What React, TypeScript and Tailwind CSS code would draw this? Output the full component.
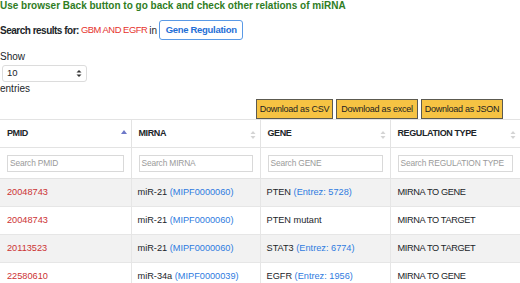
import React from "react";

type Row = {
  pmid: string;
  mirna: string;
  mipf: string;
  gene: string;
  entrez?: string;
  type: string;
};

const rows: Row[] = [
  { pmid: "20048743", mirna: "miR-21", mipf: "MIPF0000060", gene: "PTEN", entrez: "5728", type: "MIRNA TO GENE" },
  { pmid: "20048743", mirna: "miR-21", mipf: "MIPF0000060", gene: "PTEN mutant", type: "MIRNA TO TARGET" },
  { pmid: "20113523", mirna: "miR-21", mipf: "MIPF0000060", gene: "STAT3", entrez: "6774", type: "MIRNA TO TARGET" },
  { pmid: "22580610", mirna: "miR-34a", mipf: "MIPF0000039", gene: "EGFR", entrez: "1956", type: "MIRNA TO GENE" },
];

const columns = [
  { label: "PMID", search: "Search PMID", active: true },
  { label: "MIRNA", search: "Search MIRNA" },
  { label: "GENE", search: "Search GENE" },
  { label: "REGULATION TYPE", search: "Search REGULATION TYPE" },
];

const downloads = [
  { label: "Download as CSV", w: "w-[77px]" },
  { label: "Download as excel", w: "w-[82px]" },
  { label: "Download as JSON", w: "w-[82px]" },
];

function SortIcon({ active }: { active?: boolean }) {
  if (active) {
    return (
      <svg width="6" height="10" viewBox="0 0 6 10" className="absolute right-[4px] top-[9px]">
        <path d="M0 5 L3 1 L6 5 Z" fill="#6d78c8" />
      </svg>
    );
  }
  return (
    <svg width="6" height="10" viewBox="0 0 6 10" className="absolute right-[4px] top-[10px]">
      <path d="M0.5 4 L3 1 L5.5 4 Z" fill="#d4d4d4" />
      <path d="M0.5 6 L3 9 L5.5 6 Z" fill="#d4d4d4" />
    </svg>
  );
}

export default function App() {
  return (
    <div className="w-[520px] h-[283px] overflow-hidden bg-white font-['Liberation_Sans',Arial,sans-serif] text-[10px] text-[#212529]">
      <p className="text-[#2f7d1f] font-bold text-[10px] leading-[12px] h-[11px]">
        Use browser Back button to go back and check other relations of miRNA
      </p>

      <div className="flex items-center mt-[9px] h-[20px]">
        <span className="font-bold tracking-[-0.5px]">Search results for:</span>
        <span className="text-[#e5322d] ml-[2px] text-[9.4px] tracking-[-0.45px]">GBM AND EGFR</span>
        <span className="ml-[2px]">in</span>
        <button className="ml-[2px] h-[20px] w-[84px] border border-[#5a9ae6] rounded-[3px] text-[#1f6fd6] font-bold text-[9.5px] tracking-[-0.3px] leading-none">
          Gene Regulation
        </button>
      </div>

      <div className="mt-[11px] leading-[12px]">Show</div>
      <div className="mt-[2px] ml-[2px] w-[85px] h-[17px] border border-[#dcdcdc] rounded-[3px] flex items-center justify-between px-[4px] text-[9.5px]">
        <span>10</span>
        <svg width="6" height="9" viewBox="0 0 6 9">
          <path d="M0.5 3.5 L3 1 L5.5 3.5 Z" fill="#333" />
          <path d="M0.5 5.5 L3 8 L5.5 5.5 Z" fill="#333" />
        </svg>
      </div>
      <div className="leading-[12px] mt-[1px]">entries</div>

      <div className="flex justify-end gap-[3px] pr-[17px] mt-[4px]">
        {downloads.map((d) => (
          <button
            key={d.label}
            className={`${d.w} h-[20px] px-0 bg-[#f6c343] border border-[#5c5a50] text-[9px] tracking-[-0.25px] text-[#222] leading-none whitespace-nowrap`}
          >
            {d.label}
          </button>
        ))}
      </div>

      <table className="w-[520px] table-fixed border-collapse text-[9.2px]">
        <colgroup>
          <col className="w-[131px]" />
          <col className="w-[129px]" />
          <col className="w-[130px]" />
          <col className="w-[130px]" />
        </colgroup>
        <thead>
          <tr className="h-[28px]">
            {columns.map((c, i) => (
              <th
                key={c.label}
                className={`relative text-left font-bold text-[9px] tracking-[-0.4px] px-[7px] border-y border-[#e3e3e3] ${i > 0 ? "border-l" : ""}`}
              >
                {c.label}
                <SortIcon active={c.active} />
              </th>
            ))}
          </tr>
          <tr className="h-[31px]">
            {columns.map((c, i) => (
              <td key={c.label} className={`px-[7px] border-b border-[#e3e3e3] ${i > 0 ? "border-l" : ""}`}>
                <div className="h-[17px] border border-[#d9d9d9] flex items-center px-[2px] text-[8.4px] tracking-[-0.15px] text-[#9a9a9a] whitespace-nowrap overflow-hidden">
                  {c.search}
                </div>
              </td>
            ))}
          </tr>
        </thead>
        <tbody>
          {rows.map((r, i) => (
            <tr key={i} className={`h-[28px] ${i % 2 === 0 ? "bg-[#f2f2f2]" : "bg-white"}`}>
              <td className="px-[7px] text-[#cc3232] border-b border-[#e6e6e6]">{r.pmid}</td>
              <td className="px-[6px] border-l border-b border-[#e6e6e6]">
                {r.mirna} <span className="text-[#2f7be0]">({r.mipf})</span>
              </td>
              <td className="px-[6px] border-l border-b border-[#e6e6e6]">
                {r.gene}
                {r.entrez && <span className="text-[#2f7be0]"> (Entrez: {r.entrez})</span>}
              </td>
              <td className="px-[7px] border-l border-b border-[#e6e6e6] tracking-[-0.35px]">{r.type}</td>
            </tr>
          ))}
        </tbody>
      </table>
    </div>
  );
}
